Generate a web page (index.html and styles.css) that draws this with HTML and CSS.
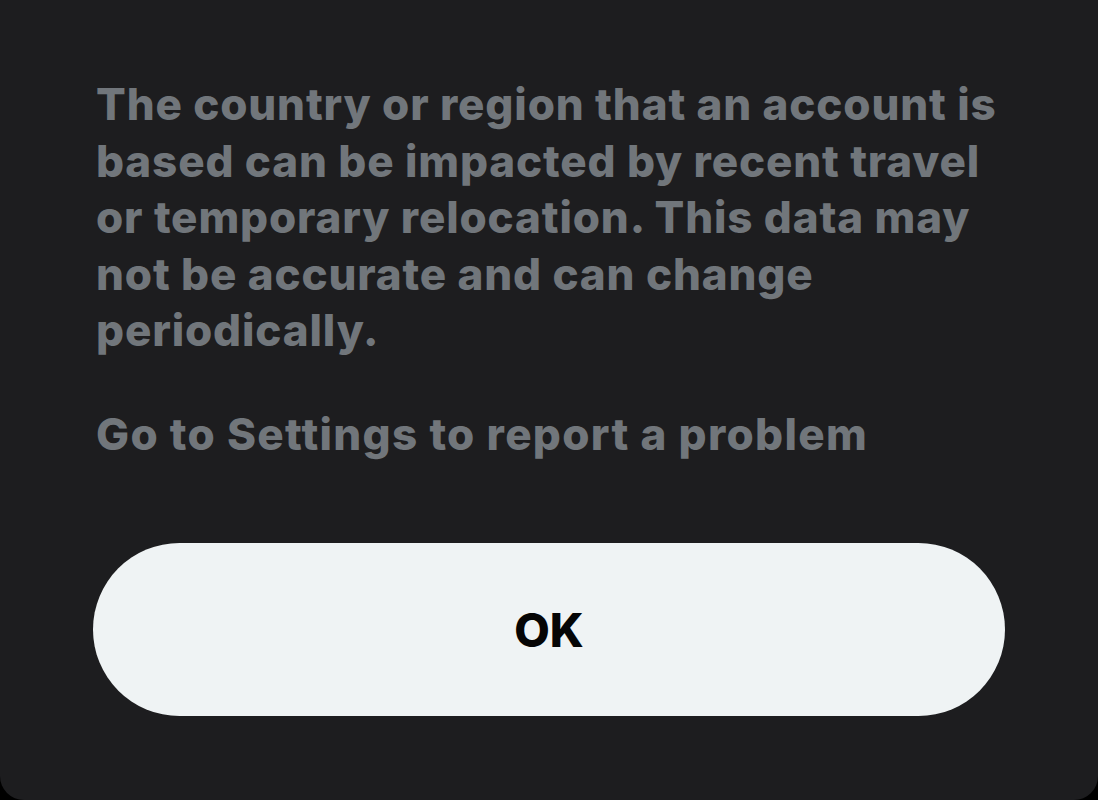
FILE: index.html
```html
<!DOCTYPE html>
<html lang="en">
<head>
<meta charset="utf-8">
<link rel="stylesheet" href="styles.css">
<title>Account based in</title>
</head>
<body>
<div class="sheet">
  <p class="note">The country or region that an account is based can be impacted by recent travel or temporary relocation. This data may not be accurate and can change periodically.</p>
  <p class="note link">Go to Settings to report a problem</p>
  <button class="ok" type="button">OK</button>
</div>
</body>
</html>
```
FILE: styles.css
```css
html, body {
  margin: 0;
  padding: 0;
  background: #000;
}
.sheet {
  width: 1098px;
  height: 800px;
  box-sizing: border-box;
  background: #1d1d1f;
  border-radius: 0 0 24px 24px;
  padding: 76px 93px 0 96px;
  display: flex;
  flex-direction: column;
  font-family: Inter, "Liberation Sans", sans-serif;
}
.note {
  margin: 0;
  color: #71767b;
  font-size: 44px;
  font-weight: 800;
  line-height: 56.5px;
  letter-spacing: 0.85px;
}
.link {
  margin-top: 47px;
  letter-spacing: 1.3px;
}
.ok {
  margin: 81px 0 0 -3px;
  height: 173px;
  border: 0;
  border-radius: 87px;
  background: #eff3f4;
  color: #050505;
  font-family: Inter, "Liberation Sans", sans-serif;
  font-size: 46px;
  font-weight: 800;
  padding: 0;
  cursor: pointer;
}
```
